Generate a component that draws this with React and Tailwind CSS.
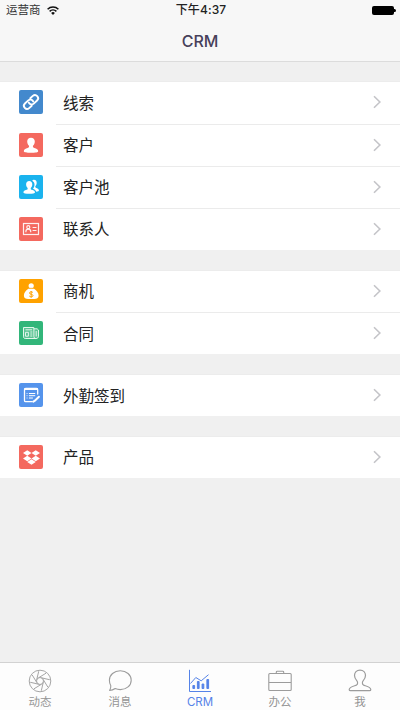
import { FaDropbox } from "react-icons/fa";

const groups = [
  [
    { name: "线索", color: "bg-[#4389cd]", icon: <LinkIcon /> },
    { name: "客户", color: "bg-[#f4695f]", icon: <PersonIcon /> },
    { name: "客户池", color: "bg-[#1ab3ee]", icon: <PeopleIcon /> },
    { name: "联系人", color: "bg-[#f4695f]", icon: <CardIcon /> },
  ],
  [
    { name: "商机", color: "bg-[#ffa200]", icon: <MoneyBagIcon /> },
    { name: "合同", color: "bg-[#32b67a]", icon: <ContractIcon /> },
  ],
  [{ name: "外勤签到", color: "bg-[#5594ec]", icon: <NoteIcon /> }],
  [{ name: "产品", color: "bg-[#f4695f]", icon: <FaDropbox className="size-[17px] text-white" /> }],
];

const tabs = [
  { name: "动态", icon: <ShutterIcon /> },
  { name: "消息", icon: <BubbleIcon /> },
  { name: "CRM", icon: <ChartIcon />, active: true },
  { name: "办公", icon: <BriefcaseIcon /> },
  { name: "我", icon: <MeIcon /> },
];

function LinkIcon() {
  return (
    <svg viewBox="0 0 24 24" className="size-6" fill="none" stroke="#fff" strokeWidth="1.9" strokeLinecap="round">
      <g transform="rotate(-43 12 12)">
        <path d="M10 15.200H6.500a3.100 3.100 0 0 1 0-6.200h4.600a3.100 3.100 0 0 1 2.900 4.100" />
        <path d="M14 8.800h3.500a3.100 3.100 0 0 1 0 6.200h-4.600a3.100 3.100 0 0 1-2.900-4.100" />
      </g>
    </svg>
  );
}

function PersonIcon() {
  return (
    <svg viewBox="0 0 24 24" className="size-6" fill="#fff">
      <path d="M12 4.700c2.300 0 3.800 1.600 3.800 3.800 0 1.900-.8 3.400-1.800 4.300-.3 1.200.1 1.800 1.300 2.200 2.400.8 3.900 1.500 3.900 3.200 0 1-2.800 1.500-7.200 1.500s-7.200-.5-7.200-1.500c0-1.700 1.500-2.400 3.900-3.200 1.200-.4 1.600-1 1.300-2.200-1-.9-1.800-2.400-1.800-4.300 0-2.200 1.500-3.800 3.800-3.800z" />
    </svg>
  );
}

function PeopleIcon() {
  return (
    <svg viewBox="0 0 24 24" className="size-6" fill="#fff">
      <path d="M14.800 4.800c1.900 0 2.900 1.300 2.900 3 0 1.500-.6 2.700-1.400 3.400-.1 1 .2 1.400 1.100 1.700 1.700.6 2.500 1.200 2.500 2.600 0 .7-.9 1.100-2.700 1.200-.4-1.500-1.600-2.400-3.200-3 1-1 1.500-2.500 1.500-4.200 0-1.600-.9-3-2.300-3.700.3-.6 1-1 1.600-1z" />
      <path d="M10.200 6.100c1.900 0 3.100 1.400 3.100 3.200 0 1.600-.7 2.900-1.500 3.600-.2 1.100.1 1.600 1.100 1.900 1.900.6 3.100 1.300 3.100 2.700 0 .9-2.300 1.300-5.800 1.300s-5.800-.4-5.800-1.300c0-1.400 1.200-2.100 3.100-2.700 1-.3 1.300-.8 1.100-1.900-.8-.7-1.500-2-1.500-3.600 0-1.800 1.200-3.200 3.100-3.200z" />
    </svg>
  );
}

function CardIcon() {
  return (
    <svg viewBox="0 0 24 24" className="size-6" fill="none" stroke="#fff" strokeOpacity="0.9" strokeWidth="1.2">
      <rect x="4.500" y="6.500" width="15" height="11" />
      <circle cx="9.300" cy="10.200" r="1.500" />
      <path d="M6.900 15.300v-1c0-1.300 1-2.100 2.400-2.100s2.400.8 2.400 2.100v1" />
      <path d="M13.600 10.500h3.900M13.600 13.500h3.900" />
    </svg>
  );
}

function MoneyBagIcon() {
  return (
    <svg viewBox="0 0 24 24" className="size-6">
      <circle cx="12.200" cy="6.800" r="2.600" fill="#fff" />
      <path d="M9.700 9.600h5c2.900 1.700 4.900 4.400 4.900 7.100 0 2.200-1.900 3.300-4.200 3.300H9.100c-2.400 0-4.200-1.100-4.200-3.300 0-2.700 1.900-5.400 4.800-7.100z" fill="#fff" />
      <path d="M9.500 9.300h5.400" stroke="#ffa200" strokeWidth=".7" />
      <path d="M13.900 13.600c-.4-.6-1-.8-1.700-.8-1 0-1.700.5-1.700 1.200 0 1.800 3.500.8 3.500 2.600 0 .8-.8 1.300-1.800 1.300-.9 0-1.500-.3-1.900-.9M12.200 12v6.600" fill="none" stroke="#ffa200" />
    </svg>
  );
}

function ContractIcon() {
  return (
    <svg viewBox="0 0 24 24" className="size-6" fill="none" stroke="#e3f6ec">
      <path d="M14.800 8V6.500H4.500v9.300c0 1 .7 1.700 1.700 1.700H17c1.500 0 2.500-.8 2.500-2.200V9l-1.400-1.200H15z" fill="#fff" fillOpacity=".2" />
      <path d="M14.900 8v7.600c0 1 .5 1.700 1.400 1.900M6.500 8.800h6.600M6.500 11.300h2.900v3.900H6.500zM11.300 11h2M11.300 13h2M11.300 15h2M17.200 10v5.500" />
    </svg>
  );
}

function NoteIcon() {
  return (
    <svg viewBox="0 0 24 24" className="size-6" fill="none" stroke="#fff" strokeLinecap="round">
      <path d="M18.700 11V6.700c0-.8-.4-1.200-1.200-1.200H6.700c-.8 0-1.200.4-1.200 1.200v10.700c0 .8.400 1.200 1.200 1.200h6.500" strokeWidth="1.300" />
      <path d="M6.100 6.100h12" strokeWidth="2" />
      <path d="M8 10.500h.1M10.300 10.500h5.500M8 12.700h.1M10.300 12.700h5.500M8 15h.1M10.300 15h3.200" />
      <path d="M19.900 13.700l-4 4-1.600.9" strokeWidth="2" />
    </svg>
  );
}

function ShutterIcon() {
  return (
    <svg viewBox="0 0 24 24" className="size-6" fill="none" stroke="#a6a6a6">
      <circle cx="12" cy="12" r="10.800" />
      <circle cx="12" cy="12" r="3.500" />
      {[0, 45, 90, 135, 180, 225, 270, 315].map((deg) => (
        <path key={deg} d="M10.500 8.800L18 4.200" transform={`rotate(${deg} 12 12)`} />
      ))}
    </svg>
  );
}

function BubbleIcon() {
  return (
    <svg viewBox="0 0 24 24" className="size-6" fill="none" stroke="#9c9c9c" strokeWidth="1.100">
      <path d="M12.300 1.800c6.200 0 10.900 4 10.900 9.400s-4.700 9.400-10.900 9.400c-1.900 0-3.600-.4-5.100-1.100-1.500 1-3.300 1.800-5.600 2 .9-1.400 1.300-2.900 1.200-4.800-.9-1.500-1.400-3.400-1.400-5.500 0-5.400 4.700-9.400 10.900-9.400z" strokeLinejoin="round" />
    </svg>
  );
}

function ChartIcon() {
  return (
    <svg viewBox="0 0 24 24" className="size-6" fill="none" stroke="#5583e8">
      <path d="M1.500.800v21.700h21.500" />
      <path d="M2.500 14.500l5.300-6 5.400 3.300L20.500 5.700" />
      <path d="M4.900 19.500v-3h1.700v3zM9.400 19.500v-7h1.700v7zM14.100 19.500v-4.500h1.700v4.500zM18.900 19.500V10.500h1.700v9z" fill="#5583e8" />
    </svg>
  );
}

function BriefcaseIcon() {
  return (
    <svg viewBox="0 0 24 24" className="size-6" fill="none" stroke="#9c9c9c" strokeWidth="1.100">
      <rect x=".8" y="4.500" width="22.400" height="17" rx="1" />
      <path d="M8.300 4.500V3.100c0-.6.300-.9.900-.9h5.600c.6 0 .9.300.9.900v1.400M1 13.500h22" />
    </svg>
  );
}

function MeIcon() {
  return (
    <svg viewBox="0 0 24 24" className="size-6" fill="none" stroke="#9c9c9c" strokeWidth="1.200">
      <path d="M12 1.100c3.400 0 5.500 2.400 5.500 5.500 0 2.300-1.100 3.900-2.400 5.300-1 1.200-1 3.300.5 4.200 1.500.8 7.200 1.500 7.200 4.600 0 .8-.4 1-1.300 1h-19c-.9 0-1.300-.2-1.300-1 0-3.100 5.700-3.800 7.200-4.600 1.500-.9 1.500-3 .5-4.200-1.300-1.400-2.400-3-2.400-5.300 0-3.100 2.100-5.500 5.500-5.500z" />
    </svg>
  );
}

function Header() {
  return (
    <header className="h-[62px] shrink-0 border-b border-[#dcdcdc] bg-[#f7f7f7]">
      <div className="grid h-5 grid-cols-3 items-center pl-1.5 pr-1 text-[11.5px] leading-5 text-[#333]">
        <div className="flex items-center gap-1.5">
          <span>运营商</span>
          <svg viewBox="0 0 12 9" className="h-[9px] w-3" fill="none" stroke="#111" strokeWidth="1.5">
            <path d="M.6 3.300a7.700 7.700 0 0 1 10.800 0M2.600 5.400a4.900 4.900 0 0 1 6.800 0" />
            <path d="M6 8.900L4.100 7a2.700 2.700 0 0 1 3.800 0z" fill="#111" stroke="none" />
          </svg>
        </div>
        <span className="whitespace-nowrap text-center text-[12px] font-medium tracking-[0.1px] text-[#222]">
          下午4:37
        </span>
        <div className="flex items-center justify-end">
          <div className="h-[9px] w-[22px] rounded-[2px] bg-black" />
          <div className="h-[3px] w-0.5 rounded-r bg-black" />
        </div>
      </div>
      <h1 className="text-center text-[16px] font-medium leading-[42px] text-[#46405a]">CRM</h1>
    </header>
  );
}

function Row({ item, first }) {
  return (
    <li className="flex h-[42.25px] items-center pl-[19px]">
      <div className={`${item.color} flex size-6 shrink-0 items-center justify-center rounded-[2px]`}>
        {item.icon}
      </div>
      <div
        className={`ml-[13px] flex h-full flex-1 items-center justify-between border-t pl-[7px] pr-[19px] ${
          first ? "border-transparent" : "border-[#ebebeb]"
        }`}
      >
        <span className="pt-px text-[15.5px] leading-none text-[#222]">{item.name}</span>
        <svg viewBox="0 0 8 14" className="mb-px h-3.5 w-2" fill="none" stroke="#c4c4c8" strokeWidth="1.6">
          <path d="M1 1.200L6.900 7 1 12.800" />
        </svg>
      </div>
    </li>
  );
}

function App() {
  return (
    <div className="flex h-[710px] w-[400px] flex-col overflow-hidden bg-[#f0f0f0] font-[Inter,'Noto_Sans_CJK_SC',sans-serif]">
      <Header />

      <main className="flex flex-1 flex-col gap-[19.7px] pt-[19.3px]">
        {groups.map((items, i) => (
          <ul key={i} className="bg-white shadow-[inset_0_1px_0_#ececec]">
            {items.map((item, j) => (
              <Row key={item.name} item={item} first={j === 0} />
            ))}
          </ul>
        ))}
      </main>

      <nav className="grid h-12 shrink-0 grid-cols-5 border-t border-[#d2d2d2] bg-[#fdfdfd]">
        {tabs.map((tab) => (
          <div key={tab.name} className="flex flex-col items-center pt-1.5">
            {tab.icon}
            <span
              className={`mt-0.5 text-[11.5px] leading-[14px] ${
                tab.active ? "text-[#5583e8]" : "text-[#959595]"
              }`}
            >
              {tab.name}
            </span>
          </div>
        ))}
      </nav>
    </div>
  );
}

export default App;
